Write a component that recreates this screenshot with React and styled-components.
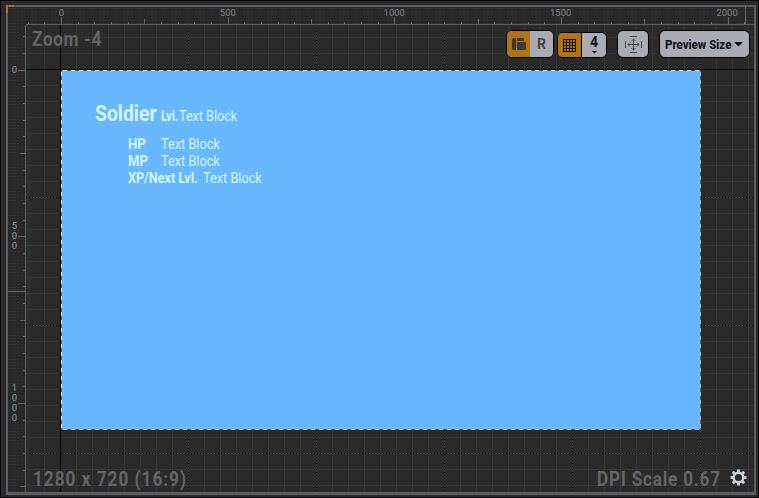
import React from "react";
import styled, { createGlobalStyle } from "styled-components";

const Global = createGlobalStyle`
  * { box-sizing: border-box; }
  body { margin: 0; background: #2a2a2a; font-family: Roboto, "Liberation Sans", sans-serif; }
  svg { display: block; }
`;

const Window = styled.div`
  width: 759px;
  height: 498px;
  border: 1px solid #050505;
  background: #2a2a2c;
  padding: 4px 1px 2px 5px;
`;

const Frame = styled.div`
  width: 750px;
  height: 490px;
  border: 2px solid #5f5f61;
  border-bottom-width: 3px;
  display: grid;
  grid-template-columns: 18px 1fr;
  grid-template-rows: 18px 1fr;
  background: #2a2a2a;
  position: relative;
`;

const rulerTexture = `
  background-color: #272727;
  background-image: radial-gradient(#313131 40%, transparent 42%), radial-gradient(#2f2f2f 40%, transparent 42%);
  background-size: 3px 3px, 4px 3px;
`;

const Corner = styled.div`
  ${rulerTexture}
`;

const OriginMark = styled.div`
  position: absolute;
  left: -2px;
  top: -2px;
  width: 8px;
  height: 8px;
  border-left: 2px solid #b87514;
  border-top: 2px dotted #b87514;
`;

const TopRuler = styled.div`
  ${rulerTexture}
  border-bottom: 1px solid #5f5f61;
  svg { margin-left: -18px; overflow: visible; }
`;

const SideRuler = styled.div`
  ${rulerTexture}
  border-right: 1px solid #5f5f61;
  svg { margin-top: -18px; overflow: visible; }
`;

const Viewport = styled.div`
  position: relative;
  display: flex;
  flex-direction: column;
  justify-content: space-between;
  overflow: hidden;
  background-color: #2a2a2a;
  background-image:
    linear-gradient(90deg, #000 1px, transparent 1px),
    linear-gradient(#000 1px, transparent 1px),
    linear-gradient(90deg, #363636 1px, transparent 1px),
    linear-gradient(#363636 1px, transparent 1px);
  background-size: 1000px 100%, 100% 1000px, 16px 16px, 16px 16px;
  background-position: 34px 0, 0 44px, 2px 0, 0 12px;
`;

const MajorLines = styled.svg`
  position: absolute;
  inset: 0;
`;

const Artboard = styled.div`
  position: absolute;
  left: 35px;
  top: 45px;
  width: 640px;
  height: 360px;
  background: #69b8ff;
  padding: 32px 0 0 34px;
  color: #d2f4ff;
`;

const Marquee = styled.svg`
  position: absolute;
  inset: 0;
`;

const Bar = styled.div`
  position: relative;
  display: flex;
  justify-content: space-between;
  align-items: flex-start;
  padding: ${(p) => (p.$foot ? "0 7px 1px 7px" : "2px 4px 0 6px")};
`;

const Caption = styled.div`
  color: #656566;
  font-size: 20px;
  line-height: 24px;
  font-weight: 700;
  white-space: nowrap;
  letter-spacing: ${(p) => p.$track}px;
  width: ${(p) => p.$w}px;
`;

const Squeeze = styled.span`
  display: inline-block;
  white-space: nowrap;
  transform-origin: 0 50%;
  transform: scaleX(${(p) => p.$x});
`;

const Tools = styled.div`
  display: flex;
  align-items: flex-start;
  padding-top: 3px;
`;

const Group = styled.div`
  display: flex;
  height: ${(p) => p.$h || 28}px;
  width: ${(p) => p.$w}px;
  margin-left: ${(p) => p.$gap || 0}px;
  margin-top: ${(p) => p.$drop || 0}px;
  border: 1px solid #000;
  border-radius: 6px;
  background: #a9acb2;
  overflow: hidden;
`;

const Segment = styled.div`
  flex: ${(p) => (p.$w ? `0 0 ${p.$w}px` : "1")};
  display: flex;
  flex-direction: column;
  align-items: center;
  justify-content: center;
  background: ${(p) => (p.$on ? "#b27318" : "#a9acb2")};
  border-right: ${(p) => (p.$line ? "1px solid #000" : "0")};
  color: ${(p) => p.$c || "#111"};
  font-weight: 700;
  font-size: 14px;
  line-height: 13px;
`;

const PreviewLabel = styled.div`
  display: flex;
  align-items: center;
  padding-left: 5px;
  font-weight: 700;
  font-size: 13.5px;
  color: #0a0a0a;
`;

const LabelSlot = styled.span`
  width: 69px;
  white-space: nowrap;
`;

const Heading = styled.div`
  display: flex;
  align-items: baseline;
  height: 34px;
  line-height: 24px;
`;

const Name = styled.span`
  width: 66px;
  font-size: 22px;
  font-weight: 700;
`;

const Stat = styled.div`
  display: flex;
  height: 17px;
  line-height: 17px;
  margin-left: 33px;
`;

const Key = styled.span`
  width: ${(p) => p.$w}px;
  font-size: 14px;
  font-weight: 700;
  white-space: nowrap;
`;

const Value = styled.span`
  font-size: 14px;
  white-space: nowrap;
`;

const Scale = styled.div`
  display: flex;
  align-items: flex-end;
  gap: 9px;
  svg { margin-bottom: 5px; }
`;

const Fit = ({ x, children }) => <Squeeze $x={x}>{children}</Squeeze>;

const steps = Array.from({ length: 44 }, (_, i) => i - 2);
const tickSize = (i) => (i % 10 === 0 ? 7 : i % 5 === 0 ? 5 : 2);
const teeth = Array.from({ length: 8 }, (_, i) => i * 45);

const HorizontalTicks = () => (
  <svg width="746" height="17" fill="#68686a" shapeRendering="crispEdges">
    {steps.map((i) => {
      const x = Math.floor(53.4 + (i * 50) / 3);
      return x > 17 && x < 745 ? <rect key={i} x={x} y={17 - tickSize(i)} width="1" height={tickSize(i)} /> : null;
    })}
    <rect x="737" y="0" width="1" height="17" />
    <g fontSize="9.5" fill="#858587" textAnchor="middle">
      {[0, 500, 1000, 1500, 2000].map((v) => (
        <text key={v} x={53.5 + v / 3.005} y="9">{v}</text>
      ))}
    </g>
  </svg>
);

const VerticalTicks = () => (
  <svg width="17" height="485" fill="#68686a" shapeRendering="crispEdges">
    {steps.map((i) => {
      const y = Math.floor(63.1 + (i * 50) / 3);
      return y > 17 && y < 485 ? <rect key={i} x={17 - tickSize(i)} y={y} width={tickSize(i)} height="1" /> : null;
    })}
    <rect x="0" y="284" width="17" height="1" />
    <g fontSize="9.5" fill="#9a9a9c" textAnchor="middle">
      <text x="6.5" y="66">0</text>
      {["5", "0", "0"].map((c, i) => <text key={i} x="6.5" y={222 + i * 10}>{c}</text>)}
      {["1", "0", "0", "0"].map((c, i) => <text key={i} x="6.5" y={384 + i * 10}>{c}</text>)}
    </g>
  </svg>
);

const Gear = () => (
  <svg width="17" height="17" viewBox="-8.5 -8.5 17 17" fill="#c9d2d8">
    <circle r="4.8" fill="none" stroke="#c9d2d8" strokeWidth="2.4" />
    {teeth.map((a) => <rect key={a} x="-1.4" y="-8" width="2.8" height="3" transform={`rotate(${a})`} />)}
  </svg>
);

export default function App() {
  return (
    <>
      <Global />
      <Window>
        <Frame>
          <Corner />
          <TopRuler><HorizontalTicks /></TopRuler>
          <SideRuler><VerticalTicks /></SideRuler>
          <Viewport>
            <MajorLines width="728" height="467" stroke="#000" strokeDasharray="1 2" shapeRendering="crispEdges">
              {[162, 290, 418, 546, 674].map((x) => <path key={x} d={`M${x + 0.5} 0V467`} />)}
              {[172, 300, 428].map((y) => <path key={y} d={`M0 ${y + 0.5}H728`} />)}
            </MajorLines>
            <Artboard>
              <Marquee width="640" height="360" fill="none" shapeRendering="crispEdges">
                <rect x=".5" y=".5" width="639" height="359" stroke="#5c5f63" />
                <path d="M0 .5H640M.5 0V360" stroke="#e2f3fb" strokeDasharray="4 4" strokeDashoffset="-2" />
                <path d="M0 359.5H640M639.5 0V360" stroke="#b9b4b0" strokeDasharray="4 4" strokeDashoffset="-2" />
              </Marquee>
              <Heading>
                <Name><Fit x={0.88}>Soldier</Fit></Name>
                <Key $w={17.5}><Fit x={0.79}>Lvl.</Fit></Key>
                <Value><Fit x={0.9}>Text Block</Fit></Value>
              </Heading>
              <Stat><Key $w={33}><Fit x={0.94}>HP</Fit></Key><Value><Fit x={0.91}>Text Block</Fit></Value></Stat>
              <Stat><Key $w={33}><Fit x={0.94}>MP</Fit></Key><Value><Fit x={0.91}>Text Block</Fit></Value></Stat>
              <Stat><Key $w={75}><Fit x={0.9}>XP/Next Lvl.</Fit></Key><Value><Fit x={0.91}>Text Block</Fit></Value></Stat>
            </Artboard>
            <Bar>
              <Caption $w={72} $track={0.75}><Fit x={0.86}>Zoom -4</Fit></Caption>
              <Tools>
                <Group $w={48}>
                  <Segment $on $w={23}>
                    <svg width="14" height="13" fill="#3d3a36">
                      <rect x="0" y="0" width="4" height="12" rx="1.5" />
                      <rect x="5" y="0" width="7" height="3" rx="1" />
                      <rect x="5" y="4" width="9" height="8" rx="1.5" />
                    </svg>
                  </Segment>
                  <Segment $c="#454547">R</Segment>
                </Group>
                <Group $w={50} $h={26} $gap={3} $drop={2}>
                  <Segment $on $line $w={24}>
                    <svg width="13" height="13" stroke="#151515" fill="none" shapeRendering="crispEdges">
                      <path d="M.5 0V13M3.5 0V13M6.5 0V13M9.5 0V13M12.5 0V13M0 .5H13M0 3.5H13M0 6.5H13M0 9.5H13M0 12.5H13" />
                    </svg>
                  </Segment>
                  <Segment>
                    4
                    <svg width="5" height="5"><path d="M0 2H5L2.5 4.5Z" fill="#111" /></svg>
                  </Segment>
                </Group>
                <Group $w={32} $gap={10}>
                  <Segment>
                    <svg width="17" height="17" stroke="#454547" fill="none">
                      <path d="M5 .5H12M5 16.5H12M.5 5V12M16.5 5V12M8.5 3V14M3 8.5H14M6.5 5L8.5 3L10.5 5M6.5 12L8.5 14L10.5 12M5 6.5L3 8.5L5 10.5M12 6.5L14 8.5L12 10.5" />
                    </svg>
                  </Segment>
                </Group>
                <Group $w={91} $gap={10}>
                  <PreviewLabel>
                    <LabelSlot><Fit x={0.855}>Preview Size</Fit></LabelSlot>
                    <svg width="9" height="5"><path d="M0 0H9L4.5 4.5Z" fill="#0a0a0a" /></svg>
                  </PreviewLabel>
                </Group>
              </Tools>
            </Bar>
            <Bar $foot>
              <Caption $w={154} $track={1.15}><Fit x={0.86}>1280 x 720 (16:9)</Fit></Caption>
              <Scale>
                <Caption $w={124} $track={0.9}><Fit x={0.86}>DPI Scale 0.67</Fit></Caption>
                <Gear />
              </Scale>
            </Bar>
          </Viewport>
          <OriginMark />
        </Frame>
      </Window>
    </>
  );
}
